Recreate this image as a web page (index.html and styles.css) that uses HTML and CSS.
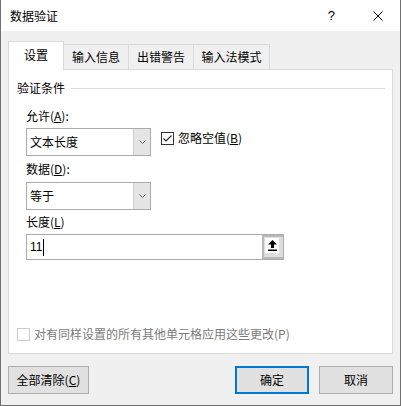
FILE: index.html
```html
<!DOCTYPE html>
<html lang="zh-CN">
<head>
<meta charset="utf-8">
<title>数据验证</title>
<link rel="stylesheet" href="styles.css">
</head>
<body>
<div class="dialog">
  <div class="titlebar">
    <span class="title">数据验证</span>
    <span class="help">?</span>
    <span class="close"><svg width="10" height="10" viewBox="0 0 10 10"><path d="M0.5 0.5L9.5 9.5M9.5 0.5L0.5 9.5" stroke="#000" stroke-width="1" fill="none"/></svg></span>
  </div>
  <div class="content">
    <div class="tabs">
      <div class="tab active w-set">设置</div>
      <div class="tab w-info">输入信息</div>
      <div class="tab w-err">出错警告</div>
      <div class="tab w-ime">输入法模式</div>
    </div>
    <div class="panel">
      <div class="group-head"><span>验证条件</span><span class="rule"></span></div>
      <div class="fields">
        <div class="label first">允许(<u>A</u>):</div>
        <div class="row">
          <div class="combo">
            <span class="value">文本长度</span>
            <span class="drop"><svg width="7" height="4" viewBox="0 0 7 4"><path d="M0.5 0.5L3.5 3.5L6.5 0.5" stroke="#606060" stroke-width="1" fill="none"/></svg></span>
          </div>
          <div class="check">
            <span class="box"><svg width="11" height="11" viewBox="0 0 11 11"><path d="M1.5 5.5L4 8L9.5 2.5" stroke="#222" stroke-width="1.1" fill="none"/></svg></span>
            <span>忽略空值(<u>B</u>)</span>
          </div>
        </div>
        <div class="label second">数据(<u>D</u>):</div>
        <div class="combo combo2">
          <span class="value">等于</span>
          <span class="drop"><svg width="7" height="4" viewBox="0 0 7 4"><path d="M0.5 0.5L3.5 3.5L6.5 0.5" stroke="#606060" stroke-width="1" fill="none"/></svg></span>
        </div>
        <div class="label third">长度(<u>L</u>)</div>
        <div class="input">
          <span class="input-text">11</span><span class="caret"></span>
          <span class="ref-btn"><span class="ref-inner"><svg width="9" height="11" viewBox="0 0 9 11"><path d="M4.5 0L9 4.5H6V8H3V4.5H0Z" fill="#000"/><rect x="0" y="9.5" width="9" height="1.5" fill="#000"/></svg></span></span>
        </div>
      </div>
      <div class="apply-all">
        <span class="box disabled"></span>
        <span>对有同样设置的所有其他单元格应用这些更改(P)</span>
      </div>
    </div>
    <div class="footer">
      <button class="btn w-clear">全部清除(<u>C</u>)</button>
      <span class="grow"></span>
      <button class="btn primary w-ok">确定</button>
      <button class="btn w-cancel">取消</button>
    </div>
  </div>
</div>
</body>
</html>
```
FILE: styles.css
```css
* { box-sizing: border-box; }
html, body { margin: 0; padding: 0; background: #ffffff; }
body {
  font-family: "Noto Sans CJK SC", "Noto Sans", sans-serif;
  font-size: 12px;
  color: #000;
}
u { text-decoration: underline; text-underline-offset: 1px; }

.dialog {
  width: 401px;
  height: 406px;
  border: 1px solid #707070;
  border-top: none;
  display: flex;
  flex-direction: column;
  background: #f0f0f0;
}

.titlebar {
  height: 31px;
  background: #ffffff;
  display: flex;
  align-items: center;
  padding-left: 9px;
  padding-right: 17px;
  flex-shrink: 0;
}
.title { line-height: 16px; }
.help {
  margin-left: auto;
  font-family: "Liberation Sans", sans-serif;
  font-size: 13px;
  line-height: 16px;
}
.close { display: flex; margin-left: 38px; }

.content {
  flex: 1;
  display: flex;
  flex-direction: column;
  padding: 10px 7px 0 7px;
}

.tabs {
  display: flex;
  align-items: flex-end;
  height: 28px;
}
.tab {
  height: 25px;
  display: flex;
  align-items: center;
  justify-content: center;
  background: #f0f0f0;
  border-top: 1px solid #d9d9d9;
  border-right: 1px solid #d9d9d9;
  line-height: 16px;
}
.tab.active {
  height: 29px;
  margin-bottom: -1px;
  background: #ffffff;
  border-left: 1px solid #d9d9d9;
  position: relative;
  z-index: 1;
  padding-bottom: 2px;
}
.w-set { width: 56px; }
.w-info { width: 65px; }
.w-err { width: 65px; }
.w-ime { width: 76px; }

.panel {
  height: 285px;
  background: #ffffff;
  border: 1px solid #d9d9d9;
  display: flex;
  flex-direction: column;
  padding: 10px 7px 11px 8px;
}

.group-head {
  display: flex;
  align-items: center;
  height: 16px;
  line-height: 16px;
}
.rule {
  flex: 1;
  height: 1px;
  background: #dcdcdc;
  margin-left: 6px;
}

.fields { padding-left: 9px; display: flex; flex-direction: column; align-items: flex-start; }
.label { line-height: 16px; height: 16px; }
.label.first { margin-top: 12px; }
.label.second { margin-top: 5px; }
.label.third { margin-top: 4px; }

.row { display: flex; align-items: flex-start; margin-top: 4px; }

.combo {
  width: 125px;
  height: 28px;
  border: 1px solid #ababab;
  display: flex;
  align-items: stretch;
  background: #fff;
}
.combo2 { margin-top: 5px; }
.combo .value {
  flex: 1;
  padding-left: 3px;
  display: flex;
  align-items: center;
  line-height: 16px;
}
.combo .drop {
  width: 17px;
  background: #e5e5e5;
  border-left: 1px solid #cfcfcf;
  display: flex;
  align-items: center;
  justify-content: center;
}

.check {
  display: flex;
  align-items: center;
  gap: 4px;
  margin-left: 10px;
  margin-top: 2px;
  height: 16px;
  line-height: 16px;
}
.box {
  width: 13px;
  height: 13px;
  border: 1px solid #333;
  background: #fff;
  display: flex;
  align-items: center;
  justify-content: center;
}
.box.disabled { border-color: #cccccc; }

.input {
  margin-top: 4px;
  width: 258px;
  height: 26px;
  border: 1px solid #ababab;
  display: flex;
  align-items: center;
  padding-left: 3px;
}
.input-text { font-family: "Liberation Sans", sans-serif; font-size: 12px; line-height: 16px; }
.caret {
  width: 1px;
  height: 17px;
  background: #000;
  margin-left: 1px;
}
.ref-btn {
  margin-left: auto;
  width: 21px;
  height: 100%;
  background: #dedede;
  border: 2px solid #b9b9b9;
  border-right: none;
  padding: 1px 0 0 1px;
}
.ref-inner {
  width: 14px;
  height: 15px;
  background: #fff;
  display: flex;
  align-items: center;
  justify-content: center;
}

.apply-all {
  margin-top: auto;
  display: flex;
  align-items: center;
  gap: 4px;
  height: 16px;
  line-height: 16px;
  color: #7a7a7a;
}

.footer {
  display: flex;
  margin-top: 12px;
  gap: 10px;
}
.grow { flex: 1; }
.btn {
  height: 28px;
  border: 1px solid #adadad;
  background: #e1e1e1;
  font-family: inherit;
  font-size: 12px;
  color: #000;
  padding: 0;
  line-height: 16px;
}
.btn.primary { border: 2px solid #0078d7; }
.w-clear { width: 81px; }
.w-ok { width: 74px; }
.w-cancel { width: 74px; }
```
